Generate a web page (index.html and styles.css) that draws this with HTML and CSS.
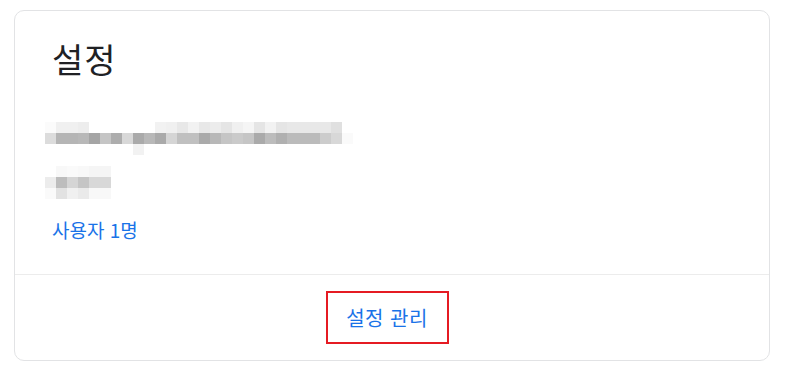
FILE: index.html
```html
<!DOCTYPE html>
<html lang="ko">
<head>
<meta charset="utf-8">
<link rel="stylesheet" href="styles.css">
</head>
<body>
<div class="page">
  <section class="card">
    <div class="card-body">
      <h1 class="title">설정</h1>
      <svg class="blur blur-1" width="308" height="33" viewBox="0 0 308 33" aria-hidden="true">
        <g shape-rendering="crispEdges">
          <rect x="0" y="0" width="11" height="11" fill="#fbfbfb"/>
          <rect x="11" y="0" width="11" height="11" fill="#f0f0f0"/>
          <rect x="22" y="0" width="11" height="11" fill="#f0f0f0"/>
          <rect x="33" y="0" width="11" height="11" fill="#ededed"/>
          <rect x="110" y="0" width="11" height="11" fill="#f2f2f2"/>
          <rect x="121" y="0" width="11" height="11" fill="#f0f0f0"/>
          <rect x="132" y="0" width="11" height="11" fill="#e8e8e8"/>
          <rect x="143" y="0" width="11" height="11" fill="#f2f2f2"/>
          <rect x="154" y="0" width="11" height="11" fill="#e8e8e8"/>
          <rect x="165" y="0" width="11" height="11" fill="#ececec"/>
          <rect x="176" y="0" width="11" height="11" fill="#e5e5e5"/>
          <rect x="187" y="0" width="11" height="11" fill="#f0f0f0"/>
          <rect x="198" y="0" width="11" height="11" fill="#f5f5f5"/>
          <rect x="209" y="0" width="11" height="11" fill="#e5e5e5"/>
          <rect x="220" y="0" width="11" height="11" fill="#f2f2f2"/>
          <rect x="231" y="0" width="11" height="11" fill="#e5e5e5"/>
          <rect x="242" y="0" width="11" height="11" fill="#e8e8e8"/>
          <rect x="253" y="0" width="11" height="11" fill="#e8e8e8"/>
          <rect x="264" y="0" width="11" height="11" fill="#e8e8e8"/>
          <rect x="275" y="0" width="11" height="11" fill="#e8e8e8"/>
          <rect x="286" y="0" width="11" height="11" fill="#e0e0e0"/>

          <rect x="0" y="11" width="11" height="11" fill="#dcdcdc"/>
          <rect x="11" y="11" width="11" height="11" fill="#b5b5b5"/>
          <rect x="22" y="11" width="11" height="11" fill="#b5b5b5"/>
          <rect x="33" y="11" width="11" height="11" fill="#b8b8b8"/>
          <rect x="44" y="11" width="11" height="11" fill="#a5a5a5"/>
          <rect x="55" y="11" width="11" height="11" fill="#c5c5c5"/>
          <rect x="66" y="11" width="11" height="11" fill="#adadad"/>
          <rect x="77" y="11" width="11" height="11" fill="#d8d8d8"/>
          <rect x="88" y="11" width="11" height="11" fill="#aaaaaa"/>
          <rect x="99" y="11" width="11" height="11" fill="#b8b8b8"/>
          <rect x="110" y="11" width="11" height="11" fill="#aaaaaa"/>
          <rect x="121" y="11" width="11" height="11" fill="#d5d5d5"/>
          <rect x="132" y="11" width="11" height="11" fill="#c0c0c0"/>
          <rect x="143" y="11" width="11" height="11" fill="#c0c0c0"/>
          <rect x="154" y="11" width="11" height="11" fill="#aaaaaa"/>
          <rect x="165" y="11" width="11" height="11" fill="#b8b8b8"/>
          <rect x="176" y="11" width="11" height="11" fill="#c5c5c5"/>
          <rect x="187" y="11" width="11" height="11" fill="#cacaca"/>
          <rect x="198" y="11" width="11" height="11" fill="#c5c5c5"/>
          <rect x="209" y="11" width="11" height="11" fill="#aaaaaa"/>
          <rect x="220" y="11" width="11" height="11" fill="#bcbcbc"/>
          <rect x="231" y="11" width="11" height="11" fill="#b0b0b0"/>
          <rect x="242" y="11" width="11" height="11" fill="#bbbbbb"/>
          <rect x="253" y="11" width="11" height="11" fill="#bbbbbb"/>
          <rect x="264" y="11" width="11" height="11" fill="#bbbbbb"/>
          <rect x="275" y="11" width="11" height="11" fill="#cccccc"/>
          <rect x="286" y="11" width="11" height="11" fill="#d8d8d8"/>
          <rect x="297" y="11" width="11" height="11" fill="#fafafa"/>

          <rect x="88" y="22" width="11" height="11" fill="#f2f2f2"/>
        </g>
      </svg>
      <svg class="blur blur-2" width="66" height="33" viewBox="0 0 66 33" aria-hidden="true">
        <g shape-rendering="crispEdges">
          <rect x="11" y="0" width="11" height="11" fill="#f8f8f8"/>
          <rect x="22" y="0" width="11" height="11" fill="#fafafa"/>
          <rect x="33" y="0" width="11" height="11" fill="#f8f8f8"/>
          <rect x="44" y="0" width="11" height="11" fill="#f5f5f5"/>
          <rect x="55" y="0" width="11" height="11" fill="#f5f5f5"/>

          <rect x="0" y="11" width="11" height="11" fill="#ececec"/>
          <rect x="11" y="11" width="11" height="11" fill="#bdbdbd"/>
          <rect x="22" y="11" width="11" height="11" fill="#d5d5d5"/>
          <rect x="33" y="11" width="11" height="11" fill="#c5c5c5"/>
          <rect x="44" y="11" width="11" height="11" fill="#d8d8d8"/>
          <rect x="55" y="11" width="11" height="11" fill="#d8d8d8"/>

          <rect x="0" y="22" width="11" height="11" fill="#fafafa"/>
          <rect x="11" y="22" width="11" height="11" fill="#e2e2e2"/>
          <rect x="22" y="22" width="11" height="11" fill="#f0f0f0"/>
          <rect x="33" y="22" width="11" height="11" fill="#eaeaea"/>
          <rect x="44" y="22" width="11" height="11" fill="#f8f8f8"/>
          <rect x="55" y="22" width="11" height="11" fill="#f8f8f8"/>
        </g>
      </svg>
      <a class="users" href="#">사용자 1명</a>
    </div>
    <div class="card-footer">
      <a class="manage" href="#">설정 관리</a>
    </div>
  </section>
</div>
</body>
</html>
```

FILE: styles.css
```css
html, body {
  margin: 0;
  padding: 0;
  background: #ffffff;
}

body {
  font-family: "Noto Sans CJK KR", "Noto Sans", Roboto, sans-serif;
}

.page {
  padding: 10px 17px 10px 14px;
}

.card {
  box-sizing: border-box;
  width: 756px;
  height: 351px;
  border: 1px solid #e2e3e5;
  border-radius: 10px;
  display: flex;
  flex-direction: column;
}

.card-body {
  flex: 1;
  display: flex;
  flex-direction: column;
  align-items: flex-start;
  padding: 0 38px;
  border-bottom: 1px solid #ececec;
}

.title {
  margin: 27px 0 0 -1px;
  font-size: 34px;
  line-height: 42px;
  font-weight: 400;
  letter-spacing: 1px;
  color: #202124;
}

.blur {
  display: block;
  margin-left: -8px;
}

.blur-1 {
  margin-top: 42px;
}

.blur-2 {
  margin-top: 11px;
}

.users {
  margin-top: 19px;
  margin-left: -1px;
  font-size: 19px;
  line-height: 24px;
  color: #1a73e8;
  text-decoration: none;
}

.card-footer {
  height: 85px;
  display: flex;
  justify-content: center;
  align-items: center;
  padding-right: 10px;
}

.manage {
  box-sizing: border-box;
  width: 123px;
  height: 53px;
  display: flex;
  align-items: center;
  justify-content: center;
  border: 2px solid #e51b23;
  font-size: 20px;
  letter-spacing: 0.5px;
  color: #1a73e8;
  text-decoration: none;
}
```
